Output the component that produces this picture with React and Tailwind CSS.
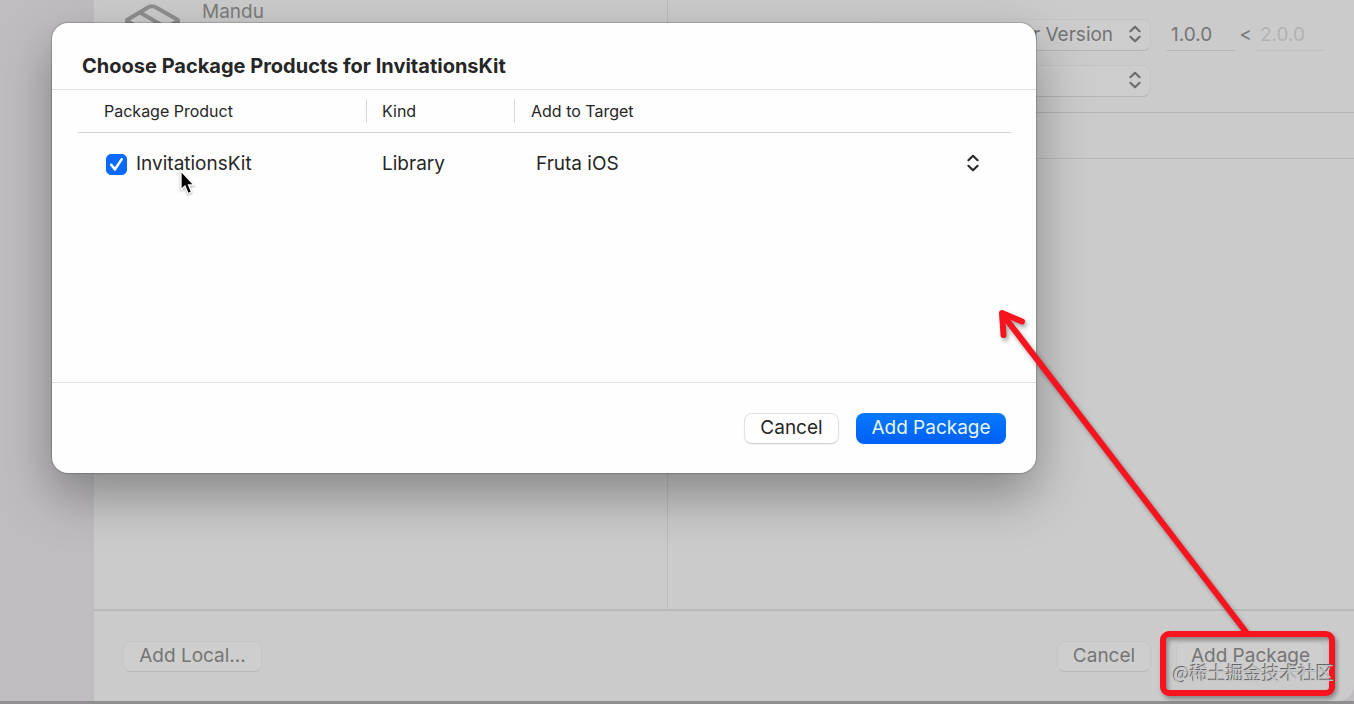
// App.jsx
// Xcode "Add Package" sheet: the product chooser on top of the dimmed package browser.
import { useState } from "react";

const PRODUCTS = [{ id: "invitations-kit", name: "InvitationsKit", kind: "Library", target: "Fruta iOS" }];

const plainBtn = "h-[31px] rounded-lg border pb-0.5 text-[19px] leading-6";
const dimBtn = "border-[#c5c5c5] border-b-[#b9b9b9] bg-[#cecece] text-[#757575]";

function UpDown({ className }) {
  return (
    <svg viewBox="0 0 14 18" className={`pointer-events-none h-[18px] w-[14px] ${className}`} fill="none"
      stroke="currentColor" strokeWidth="2.2" strokeLinecap="round" strokeLinejoin="round" aria-hidden="true">
      <path d="M2.4 6.2 7 1.8l4.6 4.4M2.4 11.8 7 16.2l4.6-4.4" />
    </svg>
  );
}

function PackageIcon() {
  return (
    <svg viewBox="0 0 56 56" className="h-14 w-14 shrink-0" fill="none" stroke="#8e8e8e" strokeWidth="4" strokeLinejoin="round" aria-hidden="true">
      <path d="M3 18 23 6Q28 2.500 33 6L54 18V41L28 54 3 41Z" />
      <path d="M3 19 28 33 54 19M16 10.500 41 25M28 33V54" />
    </svg>
  );
}

/** Dimmed pop-up button in the dependency rule form. */
function RuleSelect({ label, value }) {
  return (
    <div className="relative w-[276px]">
      <select aria-label={label} defaultValue={value}
        className="block h-8 w-full appearance-none rounded-lg border border-[#c4c4c4] border-b-[#b5b5b5] bg-[#cdcdcd] pl-3 text-[19px] leading-6 text-[#757575]">
        <option>{value}</option>
      </select>
      <UpDown className="absolute top-[6px] right-[9px] text-[#6c6c6c]" />
    </div>
  );
}

function PackageBrowser() {
  return (
    <div className="flex flex-1 bg-[#bfbdc0]">
      <aside className="w-[94px] shrink-0" />
      <main className="flex flex-1 flex-col rounded-br-2xl bg-[#cbcbcb]">
        <div className="flex flex-1">
          <section className="flex w-[574px] shrink-0 items-start gap-[22px] border-r border-[#bcbcbc] pt-[2px] pl-[30px]">
            <PackageIcon />
            <span className="text-[19px] leading-5 text-[#7c7c7c]">Mandu</span>
          </section>
          <section className="flex-1">
            <div className="flex h-[113px] flex-col gap-[14px] border-b border-[#b6b6b6] pt-[19px] pl-[207px]">
              <div className="flex items-center">
                <RuleSelect label="Dependency rule" value="Up to Next Major Version" />
                <input aria-label="Minimum version" defaultValue="1.0.0"
                  className="ml-4 h-8 w-[68px] border-b border-[#b3b3b3] bg-transparent pl-1 text-[19px] text-[#757575]" />
                <span className="w-[21px] text-center text-[19px] text-[#757575]">&lt;</span>
                <input aria-label="Maximum version" defaultValue="2.0.0" disabled
                  className="h-8 w-[68px] border-b border-[#c0c0c0] bg-transparent pl-1 text-[19px] text-[#b2b2b2]" />
              </div>
              <RuleSelect label="Add to project" value="Fruta" />
            </div>
            <div className="h-[46px] border-b border-[#b9b9b9]" />
          </section>
        </div>
        <footer className="flex h-[92px] items-start justify-between border-t-2 border-[#bababa] px-[29px] pt-[30px]">
          <button type="button" className={`${plainBtn} ${dimBtn} w-[139px]`}>Add Local...</button>
          <div className="flex gap-[25px]">
            <button type="button" className={`${plainBtn} ${dimBtn} w-[94px]`}>Cancel</button>
            <button type="button" className={`${plainBtn} ${dimBtn} w-[149px]`}>Add Package</button>
          </div>
        </footer>
      </main>
    </div>
  );
}

function ProductRow({ product }) {
  const [checked, setChecked] = useState(true);

  return (
    <tr className="text-[19px] leading-6">
      <td className="h-16 pl-7">
        <label className="flex items-center gap-[9px]">
          <span className="relative h-[21px] w-[21px]">
            <input type="checkbox" checked={checked} onChange={(e) => setChecked(e.target.checked)}
              className="block h-full w-full appearance-none rounded-[5px] border border-[#b8b8b8] checked:border-[#0a68f5] checked:bg-[#0a6bfa]" />
            {checked && (
              <svg viewBox="0 0 21 21" className="pointer-events-none absolute inset-0" fill="none" stroke="#fff"
                strokeWidth="2.6" strokeLinecap="round" strokeLinejoin="round" aria-hidden="true">
                <path d="M5.200 10.800 8.900 15.400 15.600 5.400" />
              </svg>
            )}
          </span>
          {product.name}
        </label>
      </td>
      <td className="pl-4">{product.kind}</td>
      <td className="pl-[22px]">
        <div className="relative">
          <select aria-label={`Target for ${product.name}`} defaultValue={product.target}
            className="block h-8 w-full appearance-none bg-transparent">
            <option>{product.target}</option>
          </select>
          <UpDown className="absolute top-[6px] right-[31px] text-[#2b2b2b]" />
        </div>
      </td>
    </tr>
  );
}

function ChooseProducts() {
  return (
    <div role="dialog" aria-labelledby="sheet-title"
      className="absolute top-[23px] right-[318px] left-[52px] rounded-2xl bg-[#fefefe] text-[#262626] shadow-[0_0_1px_1px_rgba(0,0,0,0.18),0_22px_52px_rgba(0,0,0,0.34)]">
      <h1 id="sheet-title" className="h-[67px] border-b border-[#dedede] px-[30px] pt-[31px] text-xl leading-6 font-bold">
        Choose Package Products for InvitationsKit
      </h1>
      <div className="min-h-[292px] pr-[25px] pl-[26px]">
        <table className="w-full table-fixed text-left">
          <thead>
            <tr className="border-b border-[#d4d4d4] text-base leading-6">
              <th className="h-[42px] w-[288px] pl-[26px] font-normal">Package Product</th>
              <th className="w-[148px] font-normal"><div className="border-l border-[#d8d8d8] pl-[15px]">Kind</div></th>
              <th className="font-normal"><div className="border-l border-[#d8d8d8] pl-4">Add to Target</div></th>
            </tr>
          </thead>
          <tbody>
            {PRODUCTS.map((p) => <ProductRow key={p.id} product={p} />)}
          </tbody>
        </table>
      </div>
      <div className="flex justify-end gap-[17px] border-t border-[#dedede] px-[30px] pt-[30px] pb-[29px]">
        <button type="button" className={`${plainBtn} w-[95px] border-[#e2e2e2] border-b-[#cfcfcf] bg-white shadow-xs`}>Cancel</button>
        <button type="button" className="h-[31px] w-[150px] rounded-lg bg-linear-to-b from-[#0a7aff] to-[#005ff5] pb-0.5 text-[19px] leading-6 text-[#e8f6ff]">Add Package</button>
      </div>
    </div>
  );
}

/** Red marker: box round the background button with an arrow up to the sheet. */
function Annotation() {
  return (
    <svg viewBox="974 284 380 420" className="pointer-events-none absolute right-0 bottom-0 h-[420px] w-[380px] drop-shadow-[2px_3px_2px_rgba(0,0,0,0.35)]"
      fill="none" stroke="#f8141f" strokeWidth="6" strokeLinecap="round" strokeLinejoin="round" aria-hidden="true">
      <path d="M1246 632 1003 315" />
      <path d="M1003.500 335 1002 313 1022 321.500" />
      <rect x="1163" y="634" width="169" height="59" rx="6" />
    </svg>
  );
}

function Pointer() {
  return (
    <svg viewBox="0 0 20 28" className="pointer-events-none absolute top-[169px] left-[178px] h-7 w-5 drop-shadow-[0_1px_1px_rgba(0,0,0,0.35)]" aria-hidden="true">
      <path d="M3 2V20.500L7 17 10 24.500 13.500 23 10.500 16H16Z" fill="#000" stroke="#fff" strokeWidth="1.300" />
    </svg>
  );
}

export default function App() {
  return (
    <div className="relative flex min-h-screen flex-col overflow-hidden bg-[#8f8f8f] pb-[3px] font-['Inter','Noto_Sans_CJK_SC',sans-serif]">
      <PackageBrowser />
      <ChooseProducts />
      <Pointer />
      <Annotation />
      <span className="absolute right-5 bottom-5 font-['Noto_Sans_CJK_SC',sans-serif] text-[18px] leading-6 text-[#c4c4c4] [text-shadow:-1px_-1px_0_#666]">
        @稀土掘金技术社区
      </span>
    </div>
  );
}
